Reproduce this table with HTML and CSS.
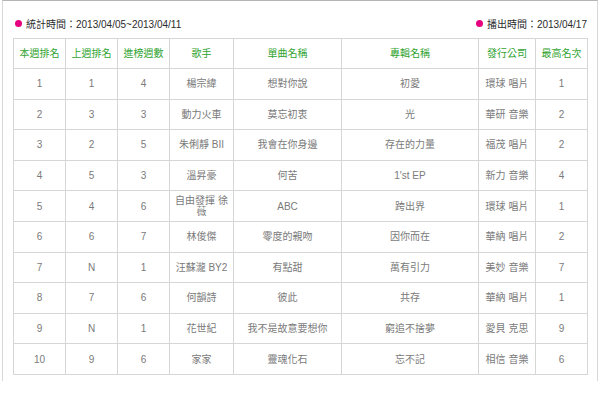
FILE: index.html
```html
<!DOCTYPE html>
<html lang="zh-Hant">
<head>
<meta charset="utf-8">
<title>排行榜</title>
<link rel="stylesheet" href="styles.css">
</head>
<body>
<div class="panel">
  <div class="info">
    <span class="tag"><i class="dot"></i>統計時間：2013/04/05~2013/04/11</span>
    <span class="tag"><i class="dot"></i>播出時間：2013/04/17</span>
  </div>
  <table class="chart">
    <colgroup>
      <col class="c1"><col class="c2"><col class="c3"><col class="c4"><col class="c5"><col class="c6"><col class="c7"><col class="c8">
    </colgroup>
    <thead>
      <tr><th>本週排名</th><th>上週排名</th><th>進榜週數</th><th>歌手</th><th>單曲名稱</th><th>專輯名稱</th><th>發行公司</th><th>最高名次</th></tr>
    </thead>
    <tbody>
      <tr><td>1</td><td>1</td><td>4</td><td>楊宗緯</td><td>想對你說</td><td>初愛</td><td>環球 唱片</td><td>1</td></tr>
      <tr><td>2</td><td>3</td><td>3</td><td>動力火車</td><td>莫忘初衷</td><td>光</td><td>華研 音樂</td><td>2</td></tr>
      <tr><td>3</td><td>2</td><td>5</td><td>朱俐靜 BII</td><td>我會在你身邊</td><td>存在的力量</td><td>福茂 唱片</td><td>2</td></tr>
      <tr><td>4</td><td>5</td><td>3</td><td>溫昇豪</td><td>何苦</td><td>1'st EP</td><td>新力 音樂</td><td>4</td></tr>
      <tr><td>5</td><td>4</td><td>6</td><td>自由發揮 徐薇</td><td>ABC</td><td>跨出界</td><td>環球 唱片</td><td>1</td></tr>
      <tr><td>6</td><td>6</td><td>7</td><td>林俊傑</td><td>零度的親吻</td><td>因你而在</td><td>華納 唱片</td><td>2</td></tr>
      <tr><td>7</td><td>N</td><td>1</td><td>汪蘇瀧 BY2</td><td>有點甜</td><td>萬有引力</td><td>美妙 音樂</td><td>7</td></tr>
      <tr><td>8</td><td>7</td><td>6</td><td>何韻詩</td><td>彼此</td><td>共存</td><td>華納 唱片</td><td>1</td></tr>
      <tr><td>9</td><td>N</td><td>1</td><td>花世紀</td><td>我不是故意要想你</td><td>窮追不捨夢</td><td>愛貝 克思</td><td>9</td></tr>
      <tr><td>10</td><td>9</td><td>6</td><td>家家</td><td>靈魂化石</td><td>忘不記</td><td>相信 音樂</td><td>6</td></tr>
    </tbody>
  </table>
</div>
</body>
</html>
```
FILE: styles.css
```css
html, body {
  margin: 0;
  padding: 0;
  background: #ffffff;
}
body {
  font-family: "Liberation Sans", "Noto Sans CJK TC", sans-serif;
  font-size: 10px;
  color: #7a7a7a;
}
.panel {
  margin-left: 2px;
  width: 574px;
  height: 380px;
  padding: 0 10px;
  border-top: 1px solid #b4b4b4;
  border-left: 1px solid #d8d8d8;
  border-right: 1px solid #d8d8d8;
}
.info {
  display: flex;
  justify-content: space-between;
  align-items: center;
  height: 14px;
  padding: 15px 0 8px 0;
  color: #2b2b2b;
  font-size: 10px;
}
.tag {
  display: flex;
  align-items: center;
  white-space: nowrap;
}
.dot {
  display: inline-block;
  width: 7px;
  height: 7px;
  border-radius: 50%;
  background: #e5007f;
  margin: 0 4px 0 2px;
}
.chart {
  width: 574px;
  border-collapse: collapse;
  table-layout: fixed;
}
.c1 { width: 52px; }
.c2 { width: 52px; }
.c3 { width: 52px; }
.c4 { width: 64px; }
.c5 { width: 108px; }
.c6 { width: 137px; }
.c7 { width: 57px; }
.c8 { width: 52px; }
.chart th,
.chart td {
  border: 1px solid #d6d6d6;
  text-align: center;
  vertical-align: middle;
  padding: 0 4px;
  line-height: 11px;
}
.chart th {
  height: 29px;
  color: #2fa32f;
  font-weight: normal;
}
.chart tbody tr {
  height: 30.6px;
}
.chart td {
  color: #7a7a7a;
}
```
